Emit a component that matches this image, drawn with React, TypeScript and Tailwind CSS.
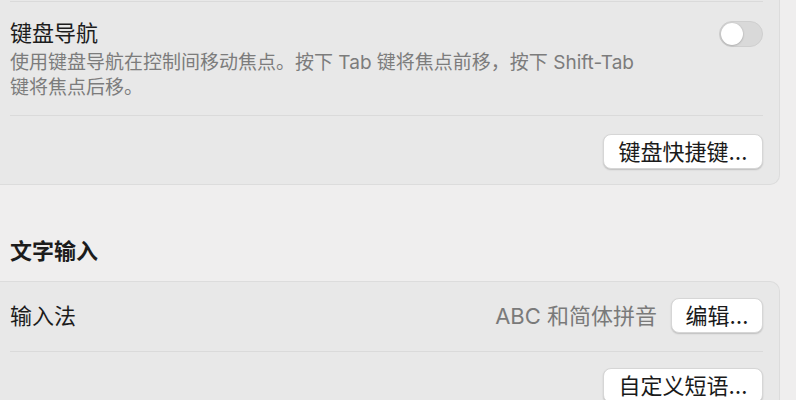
import React from "react";

const font = { fontFamily: 'Inter, "Noto Sans CJK SC", sans-serif' };

function Btn({ children, w }: { children: React.ReactNode; w: string }) {
  return (
    <div
      className={`${w} h-[35px] rounded-[8px] bg-white border border-[#d6d6d6] shadow-[0_1px_1.5px_rgba(0,0,0,0.18)] flex items-center justify-center text-[22px] text-[#1a1a1a] leading-none`}
    >
      {children}
    </div>
  );
}

export default function App() {
  return (
    <div className="w-[796px] h-[400px] overflow-hidden bg-[#efeeee]" style={font}>
      {/* Card 1 */}
      <div className="w-[780px] bg-[#e8e8e8] border-r border-b border-[#dcdcdc] rounded-br-[10px] pl-[10px] pr-[16px] pb-[15px]">
        <div className="pt-[1px]">
          <div className="h-px bg-[#dadada]" />
        </div>
        <div className="flex justify-between pt-[17px] pb-[15px]">
          <div>
            <div className="text-[22px] leading-[28px] text-[#1c1c1c]">键盘导航</div>
            <div className="mt-[3px] text-[19px] leading-[25px] text-[#7c7c7c]">
              使用键盘导航在控制间移动焦点。按下 Tab 键将焦点前移，按下 Shift-Tab
              <br />
              键将焦点后移。
            </div>
          </div>
          <div className="mt-[2px] w-[44px] h-[26px] rounded-full bg-[#d9d9d9] border border-[#cfcfcf] p-[1px] flex items-center">
            <div className="w-[22px] h-[22px] rounded-full bg-white shadow-[0_0.5px_2px_rgba(0,0,0,0.3)]" />
          </div>
        </div>
        <div className="h-px bg-[#dadada]" />
        <div className="flex justify-end pt-[18px]">
          <Btn w="w-[160px]">键盘快捷键…</Btn>
        </div>
      </div>

      {/* Section header */}
      <div className="mt-[52px] pl-[10px] text-[22px] leading-[28px] font-bold text-[#1c1c1c]">
        文字输入
      </div>

      {/* Card 2 */}
      <div className="mt-[16px] w-[780px] bg-[#e8e8e8] border-r border-t border-[#dcdcdc] rounded-tr-[10px] pl-[10px] pr-[16px]">
        <div className="flex items-center justify-between pt-[16px] pb-[18px]">
          <div className="text-[22px] leading-[28px] text-[#1c1c1c]">输入法</div>
          <div className="flex items-center gap-[14px]">
            <div className="text-[22px] text-[#7a7a7a] leading-[28px]">ABC 和简体拼音</div>
            <Btn w="w-[92px]">编辑…</Btn>
          </div>
        </div>
        <div className="h-px bg-[#dadada]" />
        <div className="flex justify-end pt-[16px] pb-[20px]">
          <Btn w="w-[160px]">自定义短语…</Btn>
        </div>
      </div>
    </div>
  );
}
